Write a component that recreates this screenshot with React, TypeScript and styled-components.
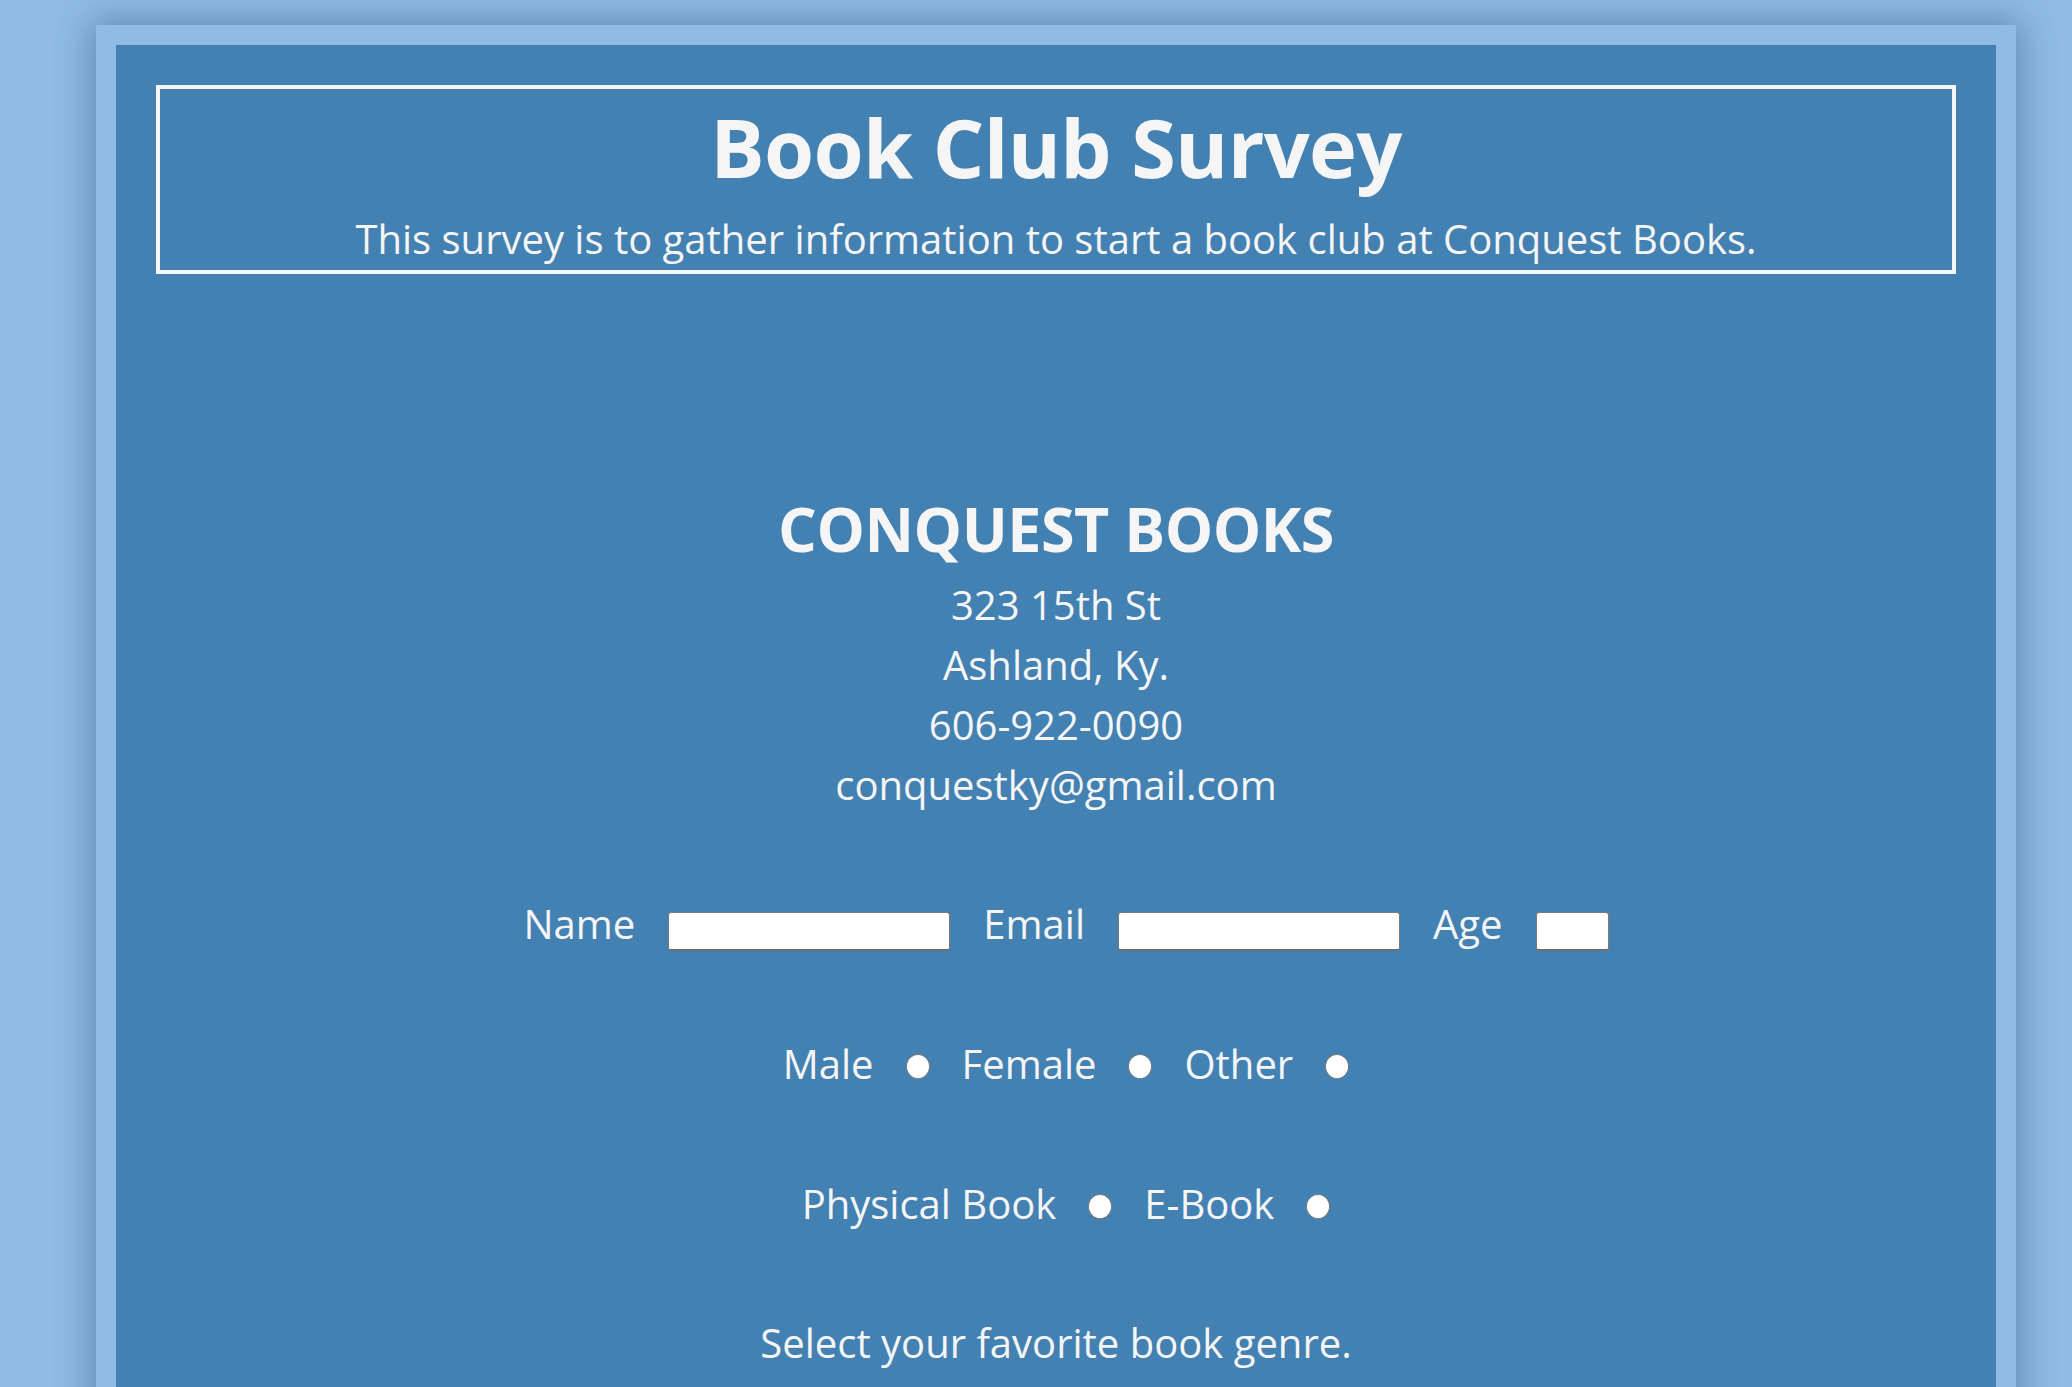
import React from "react";
import styled, { createGlobalStyle } from "styled-components";

const Global = createGlobalStyle`
  html, body {
    margin: 0;
    padding: 0;
    background: #8fbbe5;
    font-family: "Open Sans", "Noto Sans", sans-serif;
  }
  * { box-sizing: border-box; }
`;

const Frame = styled.main`
  width: 1920px;
  margin: 25px 0 0 96px;
  border: 20px solid #8fbbe5;
  box-shadow: 0 0 34px 4px rgba(40, 70, 110, 0.45);
  background: #4281b1;
  padding: 40px 40px 240px;
  color: #f5f5f5;
`;

const Header = styled.header`
  border: 4px solid #f5f5f5;
  text-align: center;
  padding: 1px 0 4px;
`;

const Title = styled.h1`
  margin: 0 0 8px;
  font-size: 81px;
  font-weight: 700;
  letter-spacing: -0.7px;
  line-height: 114px;
`;

const Subtitle = styled.p`
  margin: 0;
  font-size: 40px;
  line-height: 54px;
`;

const Contact = styled.section`
  margin-top: 212px;
  text-align: center;
`;

const StoreName = styled.h2`
  margin: 0 0 3px;
  font-size: 61px;
  font-weight: 700;
  letter-spacing: -0.5px;
  line-height: 86px;
`;

const ContactLine = styled.div`
  font-size: 40px;
  line-height: 60px;
`;

const Form = styled.form`
  margin-top: 79px;
  display: flex;
  flex-direction: column;
  gap: 80px;
`;

const Row = styled.div<{ $gap: number }>`
  display: flex;
  justify-content: center;
  align-items: center;
  height: 60px;
  gap: ${(p) => p.$gap}px;
  padding-left: 20px;
`;

const Label = styled.label`
  font-size: 40px;
  line-height: 60px;
`;

const TextInput = styled.input<{ $w: number }>`
  appearance: none;
  width: ${(p) => p.$w}px;
  height: 39px;
  margin-top: 14px;
  background: #ffffff;
  border: 1px solid #7a7a7a;
  border-bottom: 2px solid #6e6e6e;
  border-radius: 3px;
  padding: 0 6px;
  font-family: inherit;
  font-size: 24px;
`;

const Radio = styled.input`
  appearance: none;
  width: 24px;
  height: 25px;
  margin: 4px 0 0;
  border-radius: 50%;
  background: #ffffff;
  border: 1.5px solid #7a7a7a;
`;

const Prompt = styled.p`
  margin: -1px 0 0;
  text-align: center;
  font-size: 40px;
  line-height: 60px;
`;

export default function App() {
  return (
    <>
      <Global />
      <Frame>
        <Header>
          <Title>Book Club Survey</Title>
          <Subtitle>
            This survey is to gather information to start a book club at Conquest Books.
          </Subtitle>
        </Header>
        <Contact>
          <StoreName>CONQUEST BOOKS</StoreName>
          <ContactLine>323 15th St</ContactLine>
          <ContactLine>Ashland, Ky.</ContactLine>
          <ContactLine>606-922-0090</ContactLine>
          <ContactLine>conquestky@gmail.com</ContactLine>
        </Contact>
        <Form onSubmit={(e) => e.preventDefault()}>
          <Row $gap={33}>
            <Label htmlFor="name">Name</Label>
            <TextInput id="name" type="text" $w={282} />
            <Label htmlFor="email">Email</Label>
            <TextInput id="email" type="email" $w={282} />
            <Label htmlFor="age">Age</Label>
            <TextInput id="age" type="number" $w={73} />
          </Row>
          <Row $gap={32}>
            <Label htmlFor="male">Male</Label>
            <Radio id="male" type="radio" name="gender" />
            <Label htmlFor="female">Female</Label>
            <Radio id="female" type="radio" name="gender" />
            <Label htmlFor="other">Other</Label>
            <Radio id="other" type="radio" name="gender" />
          </Row>
          <Row $gap={32}>
            <Label htmlFor="physical">Physical Book</Label>
            <Radio id="physical" type="radio" name="format" />
            <Label htmlFor="ebook">E-Book</Label>
            <Radio id="ebook" type="radio" name="format" />
          </Row>
          <Prompt>Select your favorite book genre.</Prompt>
        </Form>
      </Frame>
    </>
  );
}
